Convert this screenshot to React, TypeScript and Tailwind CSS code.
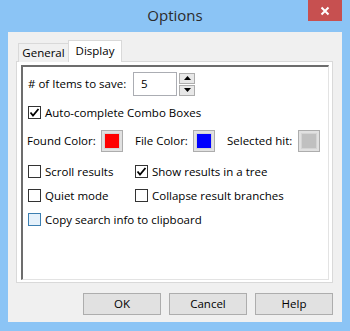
import { ReactNode } from 'react';

const font = "font-['Open_Sans','Noto_Sans',sans-serif]";

function CheckBox({ checked, label, focus }: { checked?: boolean; label: string; focus?: boolean }) {
  return (
    <div className="flex items-center h-[13px]">
      <div
        className={`w-[13px] h-[13px] border flex items-center justify-center shrink-0 ${
          focus ? 'border-[#3c7fb1] bg-[#e5f1fb]' : 'border-[#333333] bg-white'
        }`}
      >
        {checked && (
          <svg width="11" height="11" viewBox="0 0 11 11">
            <path d="M1.5 5.5 L4 8.5 L9.5 2" fill="none" stroke="#000" strokeWidth="1.8" />
          </svg>
        )}
      </div>
      <span className="ml-[4px] leading-none whitespace-nowrap">{label}</span>
    </div>
  );
}

function Swatch({ color }: { color: string }) {
  return (
    <div className="w-[22px] h-[22px] border border-[#adadad] bg-[#e1e1e1] p-[2px] shrink-0">
      <div className="w-full h-full border border-[#d4d4d4]" style={{ backgroundColor: color }} />
    </div>
  );
}

function Btn({ children }: { children: ReactNode }) {
  return (
    <div className="w-[78px] h-[22px] border border-[#adadad] bg-[#e1e1e1] flex items-center justify-center">
      {children}
    </div>
  );
}

export default function App() {
  return (
    <div className={`w-[350px] h-[331px] bg-[#8bc4f5] flex flex-col text-black ${font}`}>
      {/* title bar */}
      <div className="relative h-[32px] flex items-center justify-center">
        <span className="text-[15px] text-[#2b2b2b] leading-none pb-[2px]">Options</span>
        <div className="absolute right-[8px] top-0 w-[34px] h-[21px] bg-[#c75050] flex items-center justify-center">
          <svg width="10" height="10" viewBox="0 0 10 10">
            <path d="M1.5 1.5 L8.5 8.5 M8.5 1.5 L1.5 8.5" stroke="#fff" strokeWidth="2" />
          </svg>
        </div>
      </div>

      {/* client */}
      <div className="ml-[8px] w-[334px] h-[290px] bg-[#f0f0f0] flex flex-col text-[11.5px]">
        {/* tabs */}
        <div className="flex items-end pl-[10px] pt-[8px] -mb-px relative z-10">
          <div className="w-[51px] h-[19px] border border-b-0 border-[#d9d9d9] bg-[#f0f0f0] flex items-center justify-center leading-none">
            General
          </div>
          <div className="-ml-px w-[54px] h-[22px] border border-b-0 border-[#d9d9d9] bg-white flex items-center justify-center leading-none pb-[2px]">
            Display
          </div>
        </div>

        {/* panel */}
        <div className="ml-[8px] w-[317px] h-[222px] border border-[#d9d9d9] bg-white pl-[4px] pt-[3px] pr-[3px] pb-[2px]">
          <div className="w-full h-full border-l-2 border-t-2 border-[#6d6d6d] border-r border-b border-r-[#e3e3e3] border-b-[#e3e3e3] pl-[5px] pt-[5px] flex flex-col">
            {/* items to save */}
            <div className="flex items-center h-[24px]">
              <span className="w-[105px] whitespace-nowrap">
                # of Items to save:
              </span>
              <div className="w-[44px] h-[24px] border border-[#abadb3] bg-white flex items-center pl-[7px]">5</div>
              <div className="ml-[2px] flex flex-col gap-[1px]">
                <div className="w-[16px] h-[11px] border border-[#adadad] bg-[#e8e8e8] flex items-center justify-center">
                  <svg width="7" height="4" viewBox="0 0 7 4">
                    <path d="M0 4 L3.5 0 L7 4 Z" fill="#000" />
                  </svg>
                </div>
                <div className="w-[16px] h-[11px] border border-[#adadad] bg-[#e8e8e8] flex items-center justify-center">
                  <svg width="7" height="4" viewBox="0 0 7 4">
                    <path d="M0 0 L3.5 4 L7 0 Z" fill="#000" />
                  </svg>
                </div>
              </div>
            </div>

            <div className="mt-[10px]">
              <CheckBox checked label="Auto-complete Combo Boxes" />
            </div>

            {/* colours */}
            <div className="mt-[11px] flex items-center h-[22px] -ml-px">
              <span className="w-[74px] whitespace-nowrap">Found Color:</span>
              <Swatch color="#ff0000" />
              <span className="ml-[12px] w-[58px] whitespace-nowrap">File Color:</span>
              <Swatch color="#0000ff" />
              <span className="ml-[12px] w-[71px] whitespace-nowrap">Selected hit:</span>
              <Swatch color="#c0c0c0" />
            </div>

            <div className="mt-[13px] flex">
              <div className="w-[107px]">
                <CheckBox label="Scroll results" />
              </div>
              <CheckBox checked label="Show results in a tree" />
            </div>

            <div className="mt-[11px] flex">
              <div className="w-[107px]">
                <CheckBox label="Quiet mode" />
              </div>
              <CheckBox label="Collapse result branches" />
            </div>

            <div className="mt-[11px]">
              <CheckBox focus label="Copy search info to clipboard" />
            </div>
          </div>
        </div>

        {/* buttons */}
        <div className="mt-[10px] flex justify-end gap-[8px] pr-[9px]">
          <Btn>OK</Btn>
          <Btn>Cancel</Btn>
          <Btn>Help</Btn>
        </div>
      </div>
    </div>
  );
}
